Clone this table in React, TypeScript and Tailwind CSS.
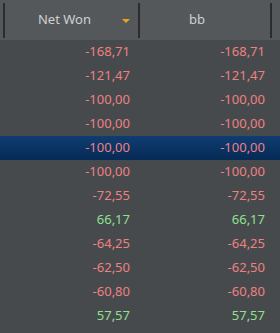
import React from 'react';

type Row = { net: string; bb: string; win: boolean };

const rows: Row[] = [
  { net: '-168,71', bb: '-168,71', win: false },
  { net: '-121,47', bb: '-121,47', win: false },
  { net: '-100,00', bb: '-100,00', win: false },
  { net: '-100,00', bb: '-100,00', win: false },
  { net: '-100,00', bb: '-100,00', win: false },
  { net: '-100,00', bb: '-100,00', win: false },
  { net: '-72,55', bb: '-72,55', win: false },
  { net: '66,17', bb: '66,17', win: true },
  { net: '-64,25', bb: '-64,25', win: false },
  { net: '-62,50', bb: '-62,50', win: false },
  { net: '-60,80', bb: '-60,80', win: false },
  { net: '57,57', bb: '57,57', win: true },
];

const SELECTED = 4;

const App: React.FC = () => {
  return (
    <div
      className="w-[280px] h-[333px] overflow-hidden bg-[#464a4d] text-[13px]"
      style={{ fontFamily: '"Noto Sans", "Open Sans", sans-serif' }}
    >
      {/* Header */}
      <div className="h-[40px] bg-[#54585b] flex items-center pl-[3px]">
        <div className="w-[135px] h-[35px] border-l-2 border-[#2a2c2e] flex items-center relative">
          <span className="flex-1 text-center pr-[14px] text-[#cfd1d2]">Net Won</span>
          <span className="absolute right-[8px] top-[16px] w-0 h-0 border-l-[4px] border-r-[4px] border-t-[4px] border-l-transparent border-r-transparent border-t-[#f0a020]" />
        </div>
        <div className="w-[134px] h-[35px] border-l-2 border-r-2 border-[#2a2c2e] flex items-center">
          <span className="flex-1 text-center pr-[16px] text-[#cfd1d2]">bb</span>
        </div>
      </div>

      {/* Rows */}
      <div className="flex flex-col">
        {rows.map((r, i) => (
          <div
            key={i}
            className={
              'h-[24px] flex items-center ' +
              (i === SELECTED ? 'bg-gradient-to-b from-[#0f3d72] to-[#062a55]' : '')
            }
          >
            <div
              className={
                'w-[130px] text-right ' + (r.win ? 'text-[#8fe08f]' : 'text-[#f08080]')
              }
            >
              {r.net}
            </div>
            <div
              className={
                'w-[135px] text-right ' + (r.win ? 'text-[#8fe08f]' : 'text-[#f08080]')
              }
            >
              {r.bb}
            </div>
          </div>
        ))}
      </div>
    </div>
  );
};

export default App;
